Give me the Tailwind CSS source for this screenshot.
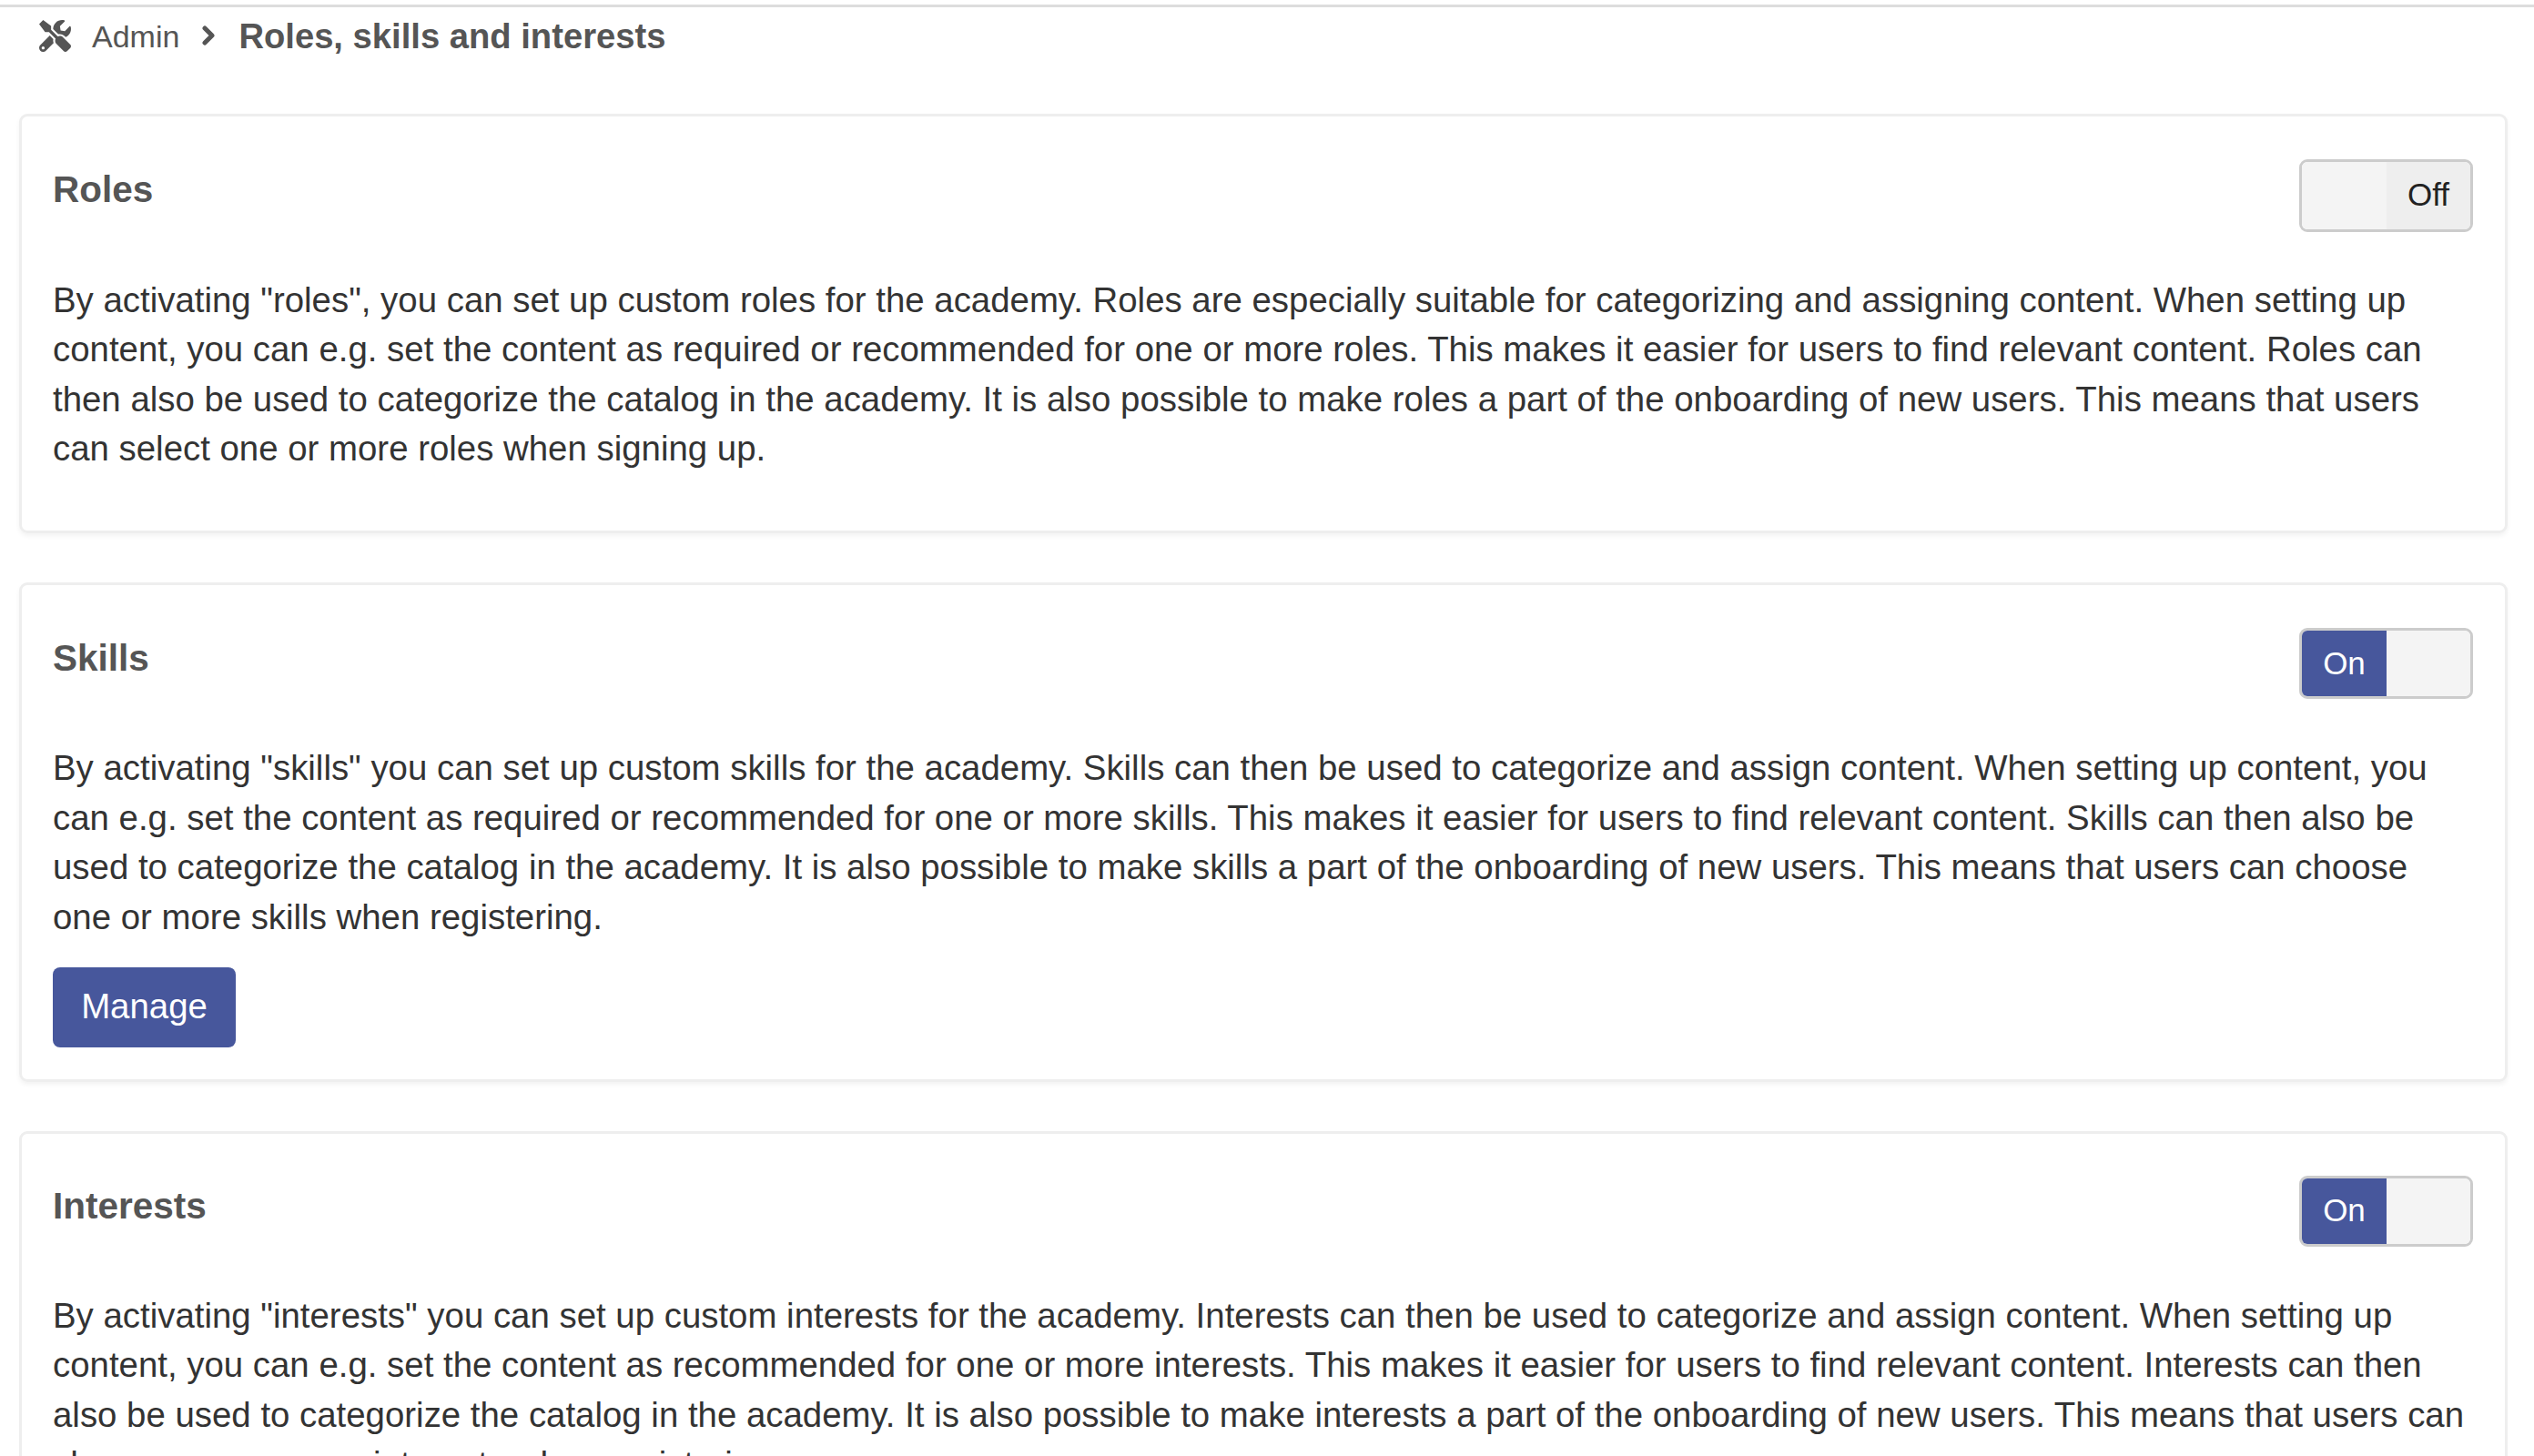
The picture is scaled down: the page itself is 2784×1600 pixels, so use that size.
<!DOCTYPE html>
<html lang="en">
<head>
<meta charset="utf-8">
<title>Roles, skills and interests</title>
<script src="https://cdn.jsdelivr.net/npm/@tailwindcss/browser@4"></script>
</head>
<body class="h-[1600px] overflow-hidden bg-white font-['Liberation_Sans',Arial,sans-serif] text-[38.4px] leading-[54.6px] text-[#333]">
<div class="mt-[5px] h-[3px] bg-[#ddd]"></div>
<nav class="flex h-[117px] items-center pb-[53px] pl-[43px] text-[#555]">
  <svg class="mb-[2px] h-[35px] w-[35px] fill-[#555]" viewBox="0 0 512 512"><path d="M501.1 395.7L384 278.6c-23.1-23.1-57.6-27.6-85.4-13.9L192 158.1V96L64 0 0 64l96 128h62.1l106.6 106.6c-13.6 27.8-9.2 62.3 13.9 85.4l117.1 117.1c14.6 14.6 38.2 14.6 52.7 0l52.7-52.7c14.5-14.6 14.5-38.2 0-52.7zM331.7 225c28.3 0 54.9 11 74.9 31l19.4 19.4c15.8-6.9 30.8-16.5 43.8-29.5 37.1-37.1 49.7-89.3 37.9-136.7-2.2-9-13.5-12.1-20.1-5.5l-74.4 74.4-67.9-11.3L334 98.9l74.4-74.4c6.6-6.6 3.4-17.9-5.7-20.2-47.4-11.7-99.6.9-136.6 37.9-28.5 28.5-41.9 66.1-41.2 103.6l82.1 82.1c8.1-1.9 16.5-2.9 24.7-2.9zm-103.9 82l-56.7-56.7L18.7 402.8c-25 25-25 65.5 0 90.5s65.5 25 90.5 0l123.6-123.6c-7.6-19.9-9.9-41.6-5-62.7zM64 472c-13.2 0-24-10.8-24-24 0-13.3 10.7-24 24-24s24 10.7 24 24c0 13.2-10.7 24-24 24z"/></svg>
  <span class="ml-[23px] text-[34px]">Admin</span>
  <svg class="mb-[2px] ml-[25px] h-[22px] w-[14px] fill-none stroke-[#555] stroke-[5]" viewBox="0 0 14 22" stroke-linecap="round" stroke-linejoin="round"><path d="M3 3l8 8-8 8"/></svg>
  <span class="ml-[26px] text-[38.2px] font-bold">Roles, skills and interests</span>
</nav>
<main class="ml-[21px] flex w-[2734px] flex-col gap-[54px]">
  <section class="h-[461px] rounded-[9px] border-[3px] border-[#eee] pl-[34px] pr-[35px] pt-[47px] shadow-[0_3px_5px_rgba(0,0,0,0.05)]">
    <div class="flex h-[80px] items-start justify-between">
      <h2 class="text-[40.5px] font-bold leading-[66px] text-[#555]">Roles</h2>
      <div class="flex h-[80px] w-[191px] overflow-hidden rounded-[9px] border-[3px] border-[#ccc]">
        <div class="w-[93px] bg-[#f4f4f4]"></div>
        <div class="flex flex-1 items-center justify-center bg-[#eee] pb-[2px] text-[35px] text-[#222]">Off</div>
      </div>
    </div>
    <p class="mt-[47.5px]">By activating "roles", you can set up custom roles for the academy. Roles are especially suitable for categorizing and assigning content. When setting up content, you can e.g. set the content as required or recommended for one or more roles. This makes it easier for users to find relevant content. Roles can then also be used to categorize the catalog in the academy. It is also possible to make roles a part of the onboarding of new users. This means that users can select one or more roles when signing up.</p>
  </section>
  <section class="h-[549px] rounded-[9px] border-[3px] border-[#eee] pl-[34px] pr-[35px] pt-[47px] shadow-[0_3px_5px_rgba(0,0,0,0.05)]">
    <div class="flex h-[80px] items-start justify-between">
      <h2 class="text-[40.5px] font-bold leading-[66px] text-[#555]">Skills</h2>
      <div class="flex h-[78px] w-[191px] overflow-hidden rounded-[9px] border-[3px] border-[#ccc]">
        <div class="flex w-[93px] items-center justify-center bg-[#47579c] text-[35px] text-white">On</div>
        <div class="flex-1 bg-[#f4f4f4]"></div>
      </div>
    </div>
    <p class="mt-[47px]">By activating "skills" you can set up custom skills for the academy. Skills can then be used to categorize and assign content. When setting up content, you can e.g. set the content as required or recommended for one or more skills. This makes it easier for users to find relevant content. Skills can then also be used to categorize the catalog in the academy. It is also possible to make skills a part of the onboarding of new users. This means that users can choose one or more skills when registering.</p>
    <button class="mt-[27.6px] h-[88px] w-[201px] rounded-[8px] bg-[#47579c] pb-[2px] text-[38.4px] text-white">Manage</button>
  </section>
  <section class="rounded-[9px] border-[3px] border-[#eee] pl-[34px] pr-[35px] pt-[45.5px]">
    <div class="flex h-[80px] items-start justify-between">
      <h2 class="text-[40.5px] font-bold leading-[66px] text-[#555]">Interests</h2>
      <div class="flex h-[78px] w-[191px] overflow-hidden rounded-[9px] border-[3px] border-[#ccc]">
        <div class="flex w-[93px] items-center justify-center bg-[#47579c] text-[35px] text-white">On</div>
        <div class="flex-1 bg-[#f4f4f4]"></div>
      </div>
    </div>
    <p class="mt-[47px]">By activating "interests" you can set up custom interests for the academy. Interests can then be used to categorize and assign content. When setting up content, you can e.g. set the content as recommended for one or more interests. This makes it easier for users to find relevant content. Interests can then also be used to categorize the catalog in the academy. It is also possible to make interests a part of the onboarding of new users. This means that users can choose one or more interests when registering.</p>
  </section>
</main>
</body>
</html>
